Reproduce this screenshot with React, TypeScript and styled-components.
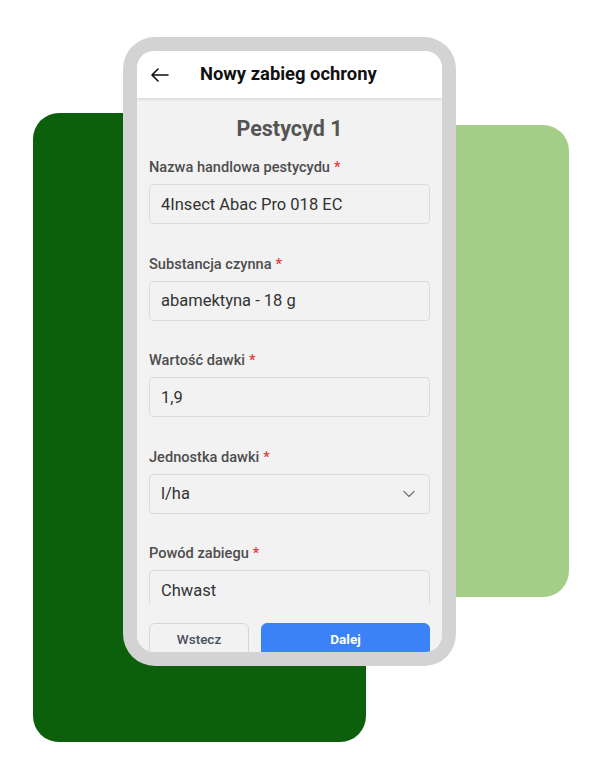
import React from "react";
import styled, { createGlobalStyle } from "styled-components";

const Global = createGlobalStyle`
  html, body { margin: 0; padding: 0; background: #ffffff; }
  body { font-family: Roboto, "Noto Sans", "Liberation Sans", sans-serif; }
  * { box-sizing: border-box; }
`;

const Stage = styled.div`
  position: relative;
  width: 600px;
  height: 760px;
  overflow: hidden;
  background: #ffffff;
  padding: 37px 0 0 123px;
`;

const Blob = styled.div<{ $color: string; $left: number; $top: number; $w: number; $h: number }>`
  position: absolute;
  left: ${(p) => p.$left}px;
  top: ${(p) => p.$top}px;
  width: ${(p) => p.$w}px;
  height: ${(p) => p.$h}px;
  background: ${(p) => p.$color};
  border-radius: 26px;
`;

const Phone = styled.div`
  position: relative;
  z-index: 1;
  width: 333px;
  height: 629px;
  background: #d3d3d3;
  border-radius: 32px;
  padding: 14px;
`;

const Screen = styled.div`
  width: 100%;
  height: 100%;
  background: #f2f2f2;
  border-radius: 17px;
  overflow: hidden;
  display: flex;
  flex-direction: column;
`;

const Header = styled.div`
  flex: 0 0 47px;
  background: #ffffff;
  display: flex;
  align-items: center;
  padding-left: 13px;
  gap: 16px;
  box-shadow: 0 1px 3px rgba(0, 0, 0, 0.14);
  position: relative;
  z-index: 1;
`;

const BackButton = styled.span`
  display: flex;
  width: 20px;
  height: 20px;
  align-items: center;
  justify-content: center;
  margin-right: 14px;
`;

const Title = styled.h1`
  margin: 0 0 2px 0;
  font-size: 18.4px;
  font-weight: 700;
  color: #111111;
`;

const Scroll = styled.div`
  flex: 0 0 506px;
  overflow: hidden;
  padding: 19px 12px 0 12px;
  display: flex;
  flex-direction: column;
`;

const SectionTitle = styled.h2`
  margin: 0 0 16px 0;
  text-align: center;
  font-size: 21.5px;
  line-height: 24px;
  font-weight: 700;
  color: #555555;
`;

const Field = styled.div`
  display: flex;
  flex-direction: column;
  gap: 7px;
  margin-bottom: 29.5px;
`;

const Label = styled.label`
  font-size: 14.6px;
  line-height: 20px;
  font-weight: 500;
  color: #4d4d4d;
`;

const Required = styled.span`
  color: #e53935;
  margin-left: 4px;
`;

const Input = styled.div`
  height: 40px;
  flex: 0 0 40px;
  border: 1px solid #dcdcdc;
  border-radius: 4px;
  background: #f2f2f2;
  display: flex;
  align-items: center;
  justify-content: space-between;
  padding: 0 14px 0 11px;
  font-size: 16.5px;
  color: #333333;
`;

const Footer = styled.div`
  flex: 1 0 auto;
  display: grid;
  grid-template-columns: 100px 1fr;
  gap: 12px;
  padding: 19px 12px 0 12px;
  background: #f2f2f2;
`;

const Button = styled.button<{ $primary?: boolean }>`
  height: 36px;
  border-radius: 6px;
  font-family: Roboto, "Noto Sans", "Liberation Sans", sans-serif;
  font-size: 13.5px;
  font-weight: ${(p) => (p.$primary ? 700 : 500)};
  color: ${(p) => (p.$primary ? "#ffffff" : "#4a5060")};
  background: ${(p) => (p.$primary ? "#3b82f6" : "#f2f2f2")};
  border: 1px solid ${(p) => (p.$primary ? "#3b82f6" : "#d6d6d6")};
  padding: 0 0 4px 0;
`;

const fields: { label: string; value: string; select?: boolean }[] = [
  { label: "Nazwa handlowa pestycydu", value: "4Insect Abac Pro 018 EC" },
  { label: "Substancja czynna", value: "abamektyna - 18 g" },
  { label: "Wartość dawki", value: "1,9" },
  { label: "Jednostka dawki", value: "l/ha", select: true },
  { label: "Powód zabiegu", value: "Chwast" },
];

export default function App() {
  return (
    <>
      <Global />
      <Stage>
        <Blob $color="#0c5f0b" $left={33} $top={113} $w={333} $h={629} />
        <Blob $color="#a4ce88" $left={300} $top={125} $w={269} $h={472} />
        <Phone>
          <Screen>
            <Header>
              <BackButton>
                <svg width="18" height="14" viewBox="0 0 18 14" fill="none">
                  <path d="M17 7H1.5M7 1L1 7l6 6" stroke="#111" strokeWidth="1.6" strokeLinecap="round" strokeLinejoin="round" />
                </svg>
              </BackButton>
              <Title>Nowy zabieg ochrony</Title>
            </Header>
            <Scroll>
              <SectionTitle>Pestycyd 1</SectionTitle>
              {fields.map((f) => (
                <Field key={f.label}>
                  <Label>
                    {f.label}
                    <Required>*</Required>
                  </Label>
                  <Input>
                    <span>{f.value}</span>
                    {f.select && (
                      <svg width="12" height="8" viewBox="0 0 12 8" fill="none">
                        <path d="M1 1.5l5 5 5-5" stroke="#7a7a7a" strokeWidth="1.4" strokeLinecap="round" strokeLinejoin="round" />
                      </svg>
                    )}
                  </Input>
                </Field>
              ))}
            </Scroll>
            <Footer>
              <Button>Wstecz</Button>
              <Button $primary>Dalej</Button>
            </Footer>
          </Screen>
        </Phone>
      </Stage>
    </>
  );
}
